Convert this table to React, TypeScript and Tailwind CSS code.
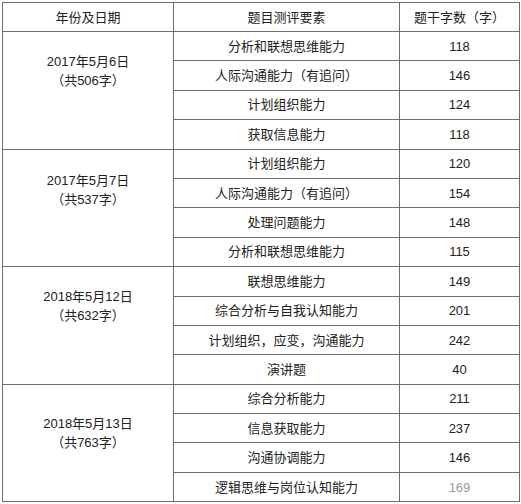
import React from "react";

type Group = { date: string; total: string; rows: [string, string][] };

const groups: Group[] = [
  {
    date: "2017年5月6日",
    total: "（共506字）",
    rows: [
      ["分析和联想思维能力", "118"],
      ["人际沟通能力（有追问）", "146"],
      ["计划组织能力", "124"],
      ["获取信息能力", "118"],
    ],
  },
  {
    date: "2017年5月7日",
    total: "（共537字）",
    rows: [
      ["计划组织能力", "120"],
      ["人际沟通能力（有追问）", "154"],
      ["处理问题能力", "148"],
      ["分析和联想思维能力", "115"],
    ],
  },
  {
    date: "2018年5月12日",
    total: "（共632字）",
    rows: [
      ["联想思维能力", "149"],
      ["综合分析与自我认知能力", "201"],
      ["计划组织，应变，沟通能力", "242"],
      ["演讲题", "40"],
    ],
  },
  {
    date: "2018年5月13日",
    total: "（共763字）",
    rows: [
      ["综合分析能力", "211"],
      ["信息获取能力", "237"],
      ["沟通协调能力", "146"],
      ["逻辑思维与岗位认知能力", "169"],
    ],
  },
];

const padTop = ["pt-[20px]", "pt-[21px]", "pt-[20px]", "pt-[29px]"];

export default function App() {
  return (
    <div
      className="w-[521px] h-[504px] bg-white pl-[2px] pt-[2px] text-[13px] text-[#222] leading-[19px]"
      style={{ fontFamily: '"Liberation Sans", "Noto Sans CJK SC", sans-serif' }}
    >
      <table className="border-collapse table-fixed w-[517px]">
        <colgroup>
          <col className="w-[171px]" />
          <col className="w-[226px]" />
          <col className="w-[120px]" />
        </colgroup>
        <thead>
          <tr className="h-[29px]">
            <th className="border border-[#6e6e6e] font-normal text-center p-0">年份及日期</th>
            <th className="border border-[#6e6e6e] font-normal text-center p-0">题目测评要素</th>
            <th className="border border-[#6e6e6e] font-normal text-center p-0">题干字数（字）</th>
          </tr>
        </thead>
        <tbody>
          {groups.map((g, gi) =>
            g.rows.map((r, ri) => (
              <tr key={`${gi}-${ri}`} className="h-[29.4px]">
                {ri === 0 && (
                  <td
                    rowSpan={4}
                    className={`border border-[#6e6e6e] text-center align-top p-0 ${padTop[gi]}`}
                  >
                    <div>{g.date}</div>
                    <div>{g.total}</div>
                  </td>
                )}
                <td className="border border-[#6e6e6e] text-center p-0">{r[0]}</td>
                <td
                  className={`border border-[#6e6e6e] text-center p-0 ${
                    gi === 3 && ri === 3 ? "text-[#9a9a9a]" : ""
                  }`}
                >
                  {r[1]}
                </td>
              </tr>
            ))
          )}
        </tbody>
      </table>
    </div>
  );
}
